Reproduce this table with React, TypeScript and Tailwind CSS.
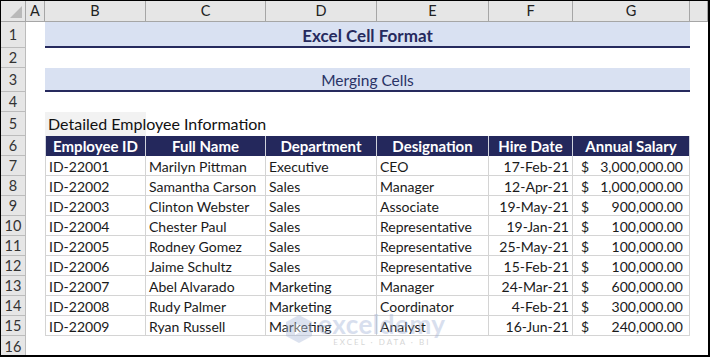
import React from 'react';

const letters = ['A', 'B', 'C', 'D', 'E', 'F', 'G', ''];

const employees = [
  ['ID-22001', 'Marilyn Pittman', 'Executive', 'CEO', '17-Feb-21', '3,000,000.00'],
  ['ID-22002', 'Samantha Carson', 'Sales', 'Manager', '12-Apr-21', '1,000,000.00'],
  ['ID-22003', 'Clinton Webster', 'Sales', 'Associate', '19-May-21', '900,000.00'],
  ['ID-22004', 'Chester Paul', 'Sales', 'Representative', '19-Jan-21', '100,000.00'],
  ['ID-22005', 'Rodney Gomez', 'Sales', 'Representative', '25-May-21', '100,000.00'],
  ['ID-22006', 'Jaime Schultz', 'Sales', 'Representative', '15-Feb-21', '100,000.00'],
  ['ID-22007', 'Abel Alvarado', 'Marketing', 'Manager', '24-Mar-21', '600,000.00'],
  ['ID-22008', 'Rudy Palmer', 'Marketing', 'Coordinator', '4-Feb-21', '300,000.00'],
  ['ID-22009', 'Ryan Russell', 'Marketing', 'Analyst', '16-Jun-21', '240,000.00'],
];

const headers = ['Employee ID', 'Full Name', 'Department', 'Designation', 'Hire Date', 'Annual Salary'];

function RowNum({ n }: { n: number }) {
  return (
    <div className="flex items-center justify-center bg-[#e6e6e6] border-b border-r border-[#bcbcbc] text-[14.5px] text-[#333]">
      {n}
    </div>
  );
}

export default function App() {
  return (
    <div
      className="w-[710px] h-[357px] bg-white border-l border-t border-r-2 border-b-2 border-black overflow-hidden relative text-[#1a1a1a]"
      style={{ fontFamily: 'Lato, "Open Sans", sans-serif' }}
    >
      <div className="grid grid-cols-[25px_19px_101px_120px_111px_112px_84px_117px_1fr] grid-rows-[21px_26px_20px_24px_20px_24px_20px_20px_20px_20px_20px_20px_20px_20px_20px_20px_1fr] h-full">
        {/* column headers */}
        <div className="relative bg-[#e6e6e6] border-b border-r border-[#a6a6a6]">
          <div className="absolute right-[3px] bottom-[3px] w-0 h-0 border-l-[12px] border-l-transparent border-b-[12px] border-b-[#b9b9b9]" />
        </div>
        {letters.map((l, i) => (
          <div
            key={i}
            className="flex items-center justify-center bg-[#e6e6e6] border-b border-r border-[#a6a6a6] text-[14.5px] text-[#222]"
          >
            {l}
          </div>
        ))}

        {/* row 1 */}
        <RowNum n={1} />
        <div />
        <div className="col-span-6 flex items-center justify-center pt-[3px] bg-[#d9e1f2] border-b-2 border-[#262a5e] text-[17px] font-bold text-[#262a5e]">
          Excel Cell Format
        </div>
        <div />

        {/* row 2 */}
        <RowNum n={2} />
        <div className="col-span-8" />

        {/* row 3 */}
        <RowNum n={3} />
        <div />
        <div className="col-span-6 flex items-center justify-center pt-[3px] bg-[#d9e1f2] border-b-2 border-[#262a5e] text-[15.5px] text-[#2a3366]">
          Merging Cells
        </div>
        <div />

        {/* row 4 */}
        <RowNum n={4} />
        <div className="col-span-8" />

        {/* row 5 */}
        <RowNum n={5} />
        <div />
        <div className="relative bg-[#f2f2f2]">
          <span className="absolute left-[3px] bottom-0 whitespace-nowrap text-[16px] text-[#111]">
            Detailed Employee Information
          </span>
        </div>
        <div className="col-span-6" />

        {/* row 6 - table header */}
        <RowNum n={6} />
        <div />
        {headers.map((h, i) => (
          <div
            key={h}
            className={`flex items-center justify-center pt-[1px] bg-[#24285c] text-white font-bold text-[15px] border-r border-[#cfd2dc] ${i === 0 ? 'border-l' : ''}`}
          >
            {h}
          </div>
        ))}
        <div />

        {/* data rows */}
        {employees.map((e, r) => (
          <React.Fragment key={e[0]}>
            <RowNum n={7 + r} />
            <div />
            <div className="flex items-center pt-[1px] px-[3px] text-[14px] border-l border-r border-b border-[#d4d4d4]">{e[0]}</div>
            <div className="flex items-center pt-[1px] px-[3px] text-[14px] border-r border-b border-[#d4d4d4]">{e[1]}</div>
            <div className="flex items-center pt-[1px] px-[3px] text-[14px] border-r border-b border-[#d4d4d4]">{e[2]}</div>
            <div className="flex items-center pt-[1px] px-[3px] text-[14px] border-r border-b border-[#d4d4d4]">{e[3]}</div>
            <div className="flex items-center justify-end pt-[1px] px-[3px] text-[14px] border-r border-b border-[#d4d4d4]">{e[4]}</div>
            <div className="flex items-center justify-between pt-[1px] pl-[8px] pr-[6px] text-[14px] border-r border-b border-[#d4d4d4]">
              <span>$</span>
              <span>{e[5]}</span>
            </div>
            <div />
          </React.Fragment>
        ))}

        {/* row 16 */}
        <div className="flex items-center justify-center bg-[#e6e6e6] border-r border-[#bcbcbc] text-[14.5px] text-[#333]">16</div>
        <div className="col-span-8" />
      </div>

      {/* watermark */}
      <div className="absolute left-[283px] top-[310px] flex items-center gap-[4px] opacity-40 pointer-events-none">
        <svg width="30" height="30" viewBox="0 0 30 30">
          <polygon points="15,1 28,8 28,22 15,29 2,22 2,8" fill="#a9b8d8" />
          <polygon points="11,9 21,15 11,21" fill="#ffffff" />
        </svg>
        <div className="flex flex-col items-center leading-none">
          <span className="text-[26px] font-bold text-[#9fb0d6] tracking-[0.5px]">exceldemy</span>
          <span className="text-[8px] text-[#9a9a9a] tracking-[2px] mt-[1px]">EXCEL · DATA · BI</span>
        </div>
      </div>
    </div>
  );
}
